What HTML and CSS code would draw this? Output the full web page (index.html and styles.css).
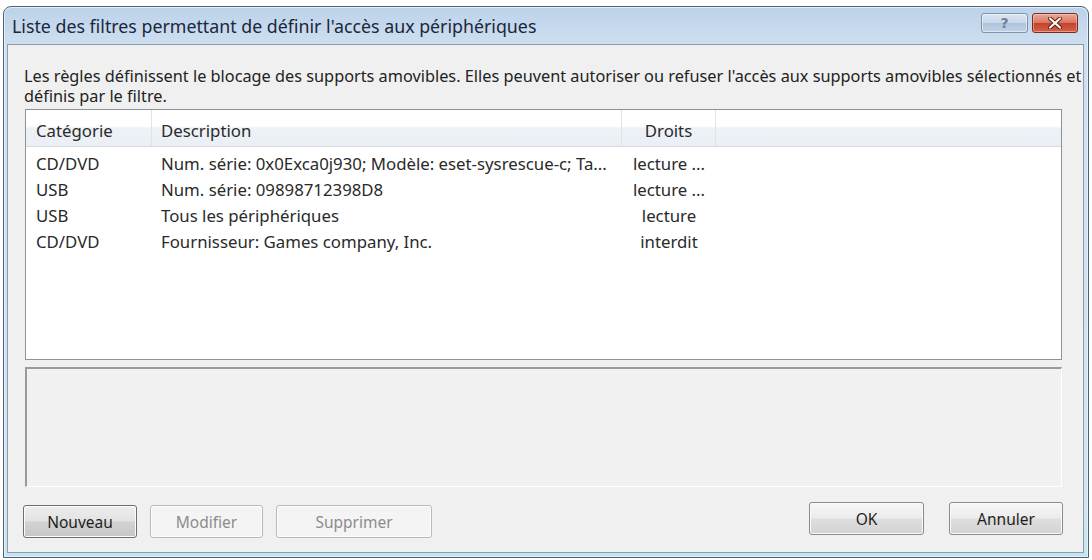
FILE: index.html
```html
<!DOCTYPE html>
<html lang="fr">
<head>
<meta charset="utf-8">
<title>Liste des filtres</title>
<link rel="stylesheet" href="styles.css">
</head>
<body>
<div class="window">
  <div class="titlebar">
    <span class="title">Liste des filtres permettant de définir l'accès aux périphériques</span>
    <div class="caption-btns">
      <div class="cap help"><span>?</span></div>
      <div class="cap close">
        <svg width="16" height="12" viewBox="0 0 16 12"><path d="M3 1.5 L13 10.5 M13 1.5 L3 10.5" stroke="#5a1a12" stroke-width="4" stroke-linecap="round"/><path d="M3 1.5 L13 10.5 M13 1.5 L3 10.5" stroke="#ffffff" stroke-width="2.2" stroke-linecap="round"/></svg>
      </div>
    </div>
  </div>
  <div class="client">
    <p class="intro">Les règles définissent le blocage des supports amovibles. Elles peuvent autoriser ou refuser l'accès aux supports amovibles sélectionnés et<br>définis par le filtre.</p>
    <div class="listbox">
      <div class="row head">
        <div class="c cat">Catégorie</div>
        <div class="c desc">Description</div>
        <div class="c rights">Droits</div>
        <div class="c rest"></div>
      </div>
      <div class="row">
        <div class="c cat">CD/DVD</div>
        <div class="c desc">Num. série: 0x0Exca0j930; Modèle: eset-sysrescue-c; Ta...</div>
        <div class="c rights">lecture ...</div>
      </div>
      <div class="row">
        <div class="c cat">USB</div>
        <div class="c desc">Num. série: 09898712398D8</div>
        <div class="c rights">lecture ...</div>
      </div>
      <div class="row">
        <div class="c cat">USB</div>
        <div class="c desc">Tous les périphériques</div>
        <div class="c rights">lecture</div>
      </div>
      <div class="row">
        <div class="c cat">CD/DVD</div>
        <div class="c desc">Fournisseur: Games company, Inc.</div>
        <div class="c rights">interdit</div>
      </div>
    </div>
    <div class="details"></div>
    <div class="buttons">
      <div class="left">
        <button class="btn default w114">Nouveau</button>
        <button class="btn disabled w113">Modifier</button>
        <button class="btn disabled w156">Supprimer</button>
      </div>
      <div class="right">
        <button class="btn w115">OK</button>
        <button class="btn w114">Annuler</button>
      </div>
    </div>
  </div>
</div>
</body>
</html>
```
FILE: styles.css
```css
* { box-sizing: border-box; }
html, body { margin: 0; padding: 0; background: #ffffff; }
body {
  font-family: "Noto Sans", "Open Sans", "Liberation Sans", sans-serif;
  font-size: 16.8px;
  color: #2a2a2a;
  padding: 6px 3px 2px 3px;
}
.window {
  width: 1086px;
  height: 552px;
  border: 1px solid #4f6275;
  border-radius: 8px 8px 0 0;
  background: linear-gradient(180deg, #bcd2ea 0px, #cfdff0 40px, #d2e4f2 500px, #c4e6ef 100%);
  padding: 0 4px 4px 3px;
  display: flex;
  flex-direction: column;
  box-shadow: inset 0 0 0 1px #e4eef8;
}
.titlebar {
  height: 37px;
  display: flex;
  align-items: center;
  justify-content: space-between;
  padding-left: 5px;
  padding-right: 6px;
}
.title {
  font-size: 17.8px;
  color: #1a273a;
  margin-top: 1px;
}
.caption-btns {
  display: flex;
  gap: 4px;
  align-self: flex-start;
  margin-top: 6px;
}
.cap {
  height: 20px;
  border-radius: 3px;
  display: flex;
  align-items: center;
  justify-content: center;
}
.help {
  width: 47px;
  border: 1px solid #7d93ab;
  background: linear-gradient(180deg, #dbe6f2 0%, #c7d6e7 50%, #afc4dc 51%, #bfd2e6 100%);
  box-shadow: inset 0 0 0 1px rgba(255,255,255,0.5);
}
.help span {
  font-family: "DejaVu Sans", sans-serif;
  font-weight: bold;
  font-size: 14px;
  color: #6f7f92;
  line-height: 1;
}
.close {
  width: 46px;
  border: 1px solid #7e2b1f;
  background: linear-gradient(180deg, #eaa998 0%, #da7662 48%, #c7412a 52%, #d4634a 100%);
  box-shadow: inset 0 0 0 1px rgba(255,220,210,0.45);
}
.client {
  flex: 1;
  background: #f0f0f0;
  border: 1px solid #8b9db1;
  padding: 21px 21px 0 16px;
  display: flex;
  flex-direction: column;
}
.intro {
  margin: 0 -24px 3px 0;
  font-size: 16.3px;
  line-height: 20px;
  color: #222;
  white-space: nowrap;
}
.listbox {
  height: 251px;
  background: #ffffff;
  border: 1px solid #8d9198;
  margin-left: 1px;
}
.row {
  display: flex;
  height: 26px;
  align-items: center;
}
.row.head {
  height: 37px;
  align-items: stretch;
  background: linear-gradient(180deg, #ffffff 0%, #ffffff 45%, #eef2f7 50%, #eaeff5 100%);
  border-bottom: 1px solid #d6d9de;
  margin-bottom: 3px;
}
.row.head .c {
  display: flex;
  align-items: center;
  padding-top: 4px;
  border-right: 1px solid #dfe3e8;
}
.row.head .rest { border-right: none; flex: 1; }
.c { white-space: nowrap; overflow: hidden; }
.cat { width: 126px; padding-left: 10px; }
.desc { width: 470px; padding-left: 9px; }
.rights { width: 94px; text-align: center; justify-content: center; }
.details {
  height: 120px;
  margin-top: 7px;
  margin-left: 1px;
  border-top: 2px solid #9a9a9a;
  border-left: 2px solid #9a9a9a;
  border-right: 1px solid #ffffff;
  border-bottom: 1px solid #ffffff;
  background: #f1f1f1;
}
.buttons {
  display: flex;
  justify-content: space-between;
  margin-top: 15px;
}
.left, .right { display: flex; gap: 13px; }
.left { margin-left: -1px; margin-top: 3px; }
.right { gap: 25px; margin-right: -1px; }
.btn {
  height: 33px;
  font-family: "Noto Sans", "Open Sans", "Liberation Sans", sans-serif;
  font-size: 15.5px;
  color: #1e1e1e;
  border: 1px solid #8a8a8a;
  border-radius: 3px;
  background: linear-gradient(180deg, #f6f6f6 0%, #ececec 48%, #dedede 52%, #d3d3d3 100%);
  box-shadow: inset 0 0 0 1px #fbfbfb;
  padding: 0;
}
.btn.default {
  border-color: #6f6f6f;
  background: linear-gradient(180deg, #eeeeee 0%, #e2e2e2 48%, #d2d2d2 52%, #c7c7c7 100%);
}
.btn.disabled {
  color: #8c8c8c;
  border-color: #b7b9bb;
  background: #f4f4f4;
  box-shadow: inset 0 0 0 1px #fdfdfd;
}
.w113 { width: 113px; }
.w114 { width: 114px; }
.w115 { width: 115px; }
.w156 { width: 156px; }
```
